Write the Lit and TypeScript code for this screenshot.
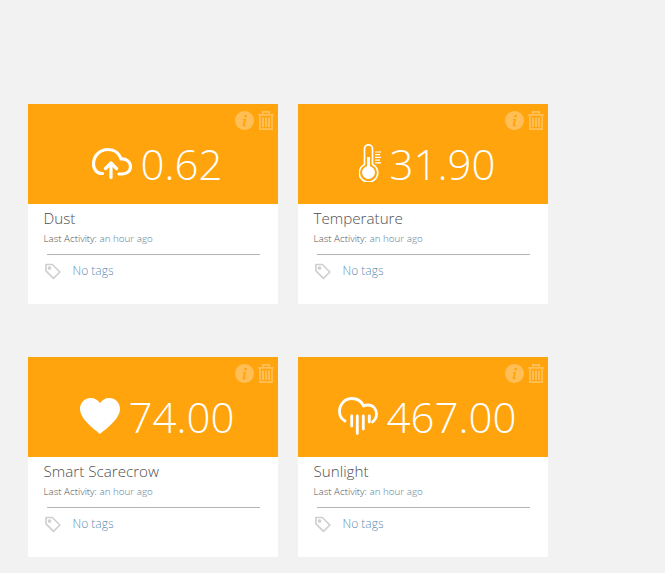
import { LitElement, html, css, svg } from 'lit';
import { customElement, property } from 'lit/decorators.js';

const icons: Record<string, unknown> = {
  upload: svg`<svg class="kind" style="width:40px;height:32px" viewBox="0 0 40 32" fill="none" stroke="#fff" stroke-width="3.200" stroke-linecap="round" stroke-linejoin="round">
    <path d="M10.500 26.500C5 26.500 1.500 22.500 1.500 17 1.500 8.500 8 2.500 16 2.500c6 0 11 3.500 13 9.500 5.500-.5 9.500 3 9.500 7.500s-3.500 7.500-8 7.500H27"/>
    <path d="M19 30.500V16M13.500 21.500 19 16l5.500 5.500"/></svg>`,
  thermo: svg`<svg class="kind" style="width:22px;height:38px" viewBox="0 0 22 38" fill="none" stroke="#fff">
    <path stroke-width="1.700" d="M5.500 20.500V4.800a4 4 0 0 1 8 0v15.700a9.200 9.200 0 1 1-8 0Z"/>
    <circle cx="9.500" cy="28.500" r="6.500" fill="#fff" stroke="none"/>
    <path stroke-width="3" d="M9.500 13v14"/>
    <path stroke-width="1.200" d="M16 8h6M16 10.700h5M16 13.400h6M16 16.100h5M16 18.800h6"/></svg>`,
  heart: svg`<svg class="kind" style="width:40px;height:36px" viewBox="0 0 41 37" fill="#fff" preserveAspectRatio="none">
    <path d="M20.500 37C17 33.500 0 22.500 0 11.300 0 4.800 5 0 11 0c4 0 7.500 2 9.500 5.500C22.500 2 26 0 30 0c6 0 11 4.800 11 11.300C41 22.500 24 33.500 20.500 37Z"/></svg>`,
  rain: svg`<svg class="kind" style="width:40px;height:38px" viewBox="0 0 40 38" fill="none" stroke="#fff" stroke-width="2.800" stroke-linecap="round" stroke-linejoin="round">
    <path d="M7 24C3.500 22 1.500 18.500 1.500 14.500 1.500 7 7 1.500 14 1.500c5 0 9.500 3 11.500 7.500 1.500-1 3-1 4.500-1 5 0 8.500 4 8.500 9 0 3-1.500 6-4 8"/>
    <path d="M13.700 19v10M19.300 19v17.500M25.300 19v13M31.300 19v6"/></svg>`,
};

const info = html`<svg class="tool" style="width:19px;height:19px" viewBox="0 0 19 19" fill="#fff">
  <path fill-rule="evenodd" d="M9.500 0a9.500 9.500 0 1 1 0 19 9.500 9.500 0 0 1 0-19Zm1.100 3.700a1.400 1.400 0 1 0 0 2.800 1.400 1.400 0 0 0 0-2.800ZM8 8l-.2.900h1.100l-1.200 5c-.2 1 .3 1.500 1.200 1.500.8 0 1.700-.4 2.300-1.100l-.2-.6c-.3.200-.7.400-1 .4-.2 0-.3-.2-.2-.6L11.100 8Z"/></svg>`;

const trash = html`<svg class="tool" style="width:16px;height:19px" viewBox="0 0 16 19" fill="none" stroke="#fff" stroke-width="1.700">
  <path d="M.2 3.900h15.600M4.800 3.700V.9h6.400v2.800M2 4v14.200h12V4"/>
  <path stroke-width="2" d="M5 6.500v9.500M8 6.500v9.500M11 6.500v9.500"/></svg>`;

const tag = html`<svg class="tag" viewBox="0 0 17 17" fill="none" stroke="#cfcfcf" stroke-width="1.700" stroke-linejoin="round">
  <path d="M1 1h6.800l8 8-6.800 6.800-8-8Z"/><circle cx="4.800" cy="4.800" r="1.100"/></svg>`;

@customElement('device-card')
export class DeviceCard extends LitElement {
  static styles = css`
    :host {
      display: block;
      width: 250px;
      height: 200px;
      background: #fff;
    }
    .head {
      position: relative;
      height: 100px;
      background: #ffa40d;
      display: flex;
      align-items: center;
      justify-content: center;
      padding: 18px 0 0 8px;
      box-sizing: border-box;
    }
    .tools {
      position: absolute;
      top: 7px;
      right: 4px;
      display: flex;
      align-items: center;
      gap: 4px;
      opacity: 0.3;
    }
    .tool {
      display: block;
    }
    .kind {
      flex: none;
      display: block;
      margin-right: 9px;
    }
    .value {
      font: 300 42px/57px 'Open Sans', sans-serif;
      color: #fff;
    }
    .body {
      padding: 4px 16px 0 15.500px;
    }
    .name {
      font: 300 15.200px/20px 'Open Sans', sans-serif;
      color: #4f4f4f;
    }
    .activity {
      font: 300 9.800px/12px 'Open Sans', sans-serif;
      color: #555;
      margin-top: 5px;
    }
    .activity span {
      color: #5b7d96;
    }
    hr {
      border: 0;
      border-top: 1px solid #b4b4b4;
      margin: 9px 2px 0 3.500px;
    }
    .tags {
      display: flex;
      align-items: center;
      margin-top: 7px;
      height: 18px;
    }
    .tag {
      width: 16px;
      height: 17px;
      flex: none;
      margin: 0 12px 0 1px;
    }
    .none {
      font: 300 12px/16px 'Open Sans', sans-serif;
      color: #5f8fb4;
    }
  `;

  @property() name = '';
  @property() value = '';
  @property() icon = '';

  render() {
    return html`
      <div class="head">
        <div class="tools">${info}${trash}</div>
        ${icons[this.icon]}
        <span class="value">${this.value}</span>
      </div>
      <div class="body">
        <div class="name">${this.name}</div>
        <div class="activity">Last Activity: <span>an hour ago</span></div>
        <hr />
        <div class="tags">${tag}<span class="none">No tags</span></div>
      </div>
    `;
  }
}

@customElement('app-root')
export class AppRoot extends LitElement {
  static styles = css`
    :host {
      display: block;
      min-height: 573px;
      box-sizing: border-box;
      background: #f2f2f2;
      padding: 104px 0 0 28px;
    }
    .grid {
      display: grid;
      grid-template-columns: 250px 250px;
      column-gap: 20px;
      row-gap: 53px;
    }
  `;

  render() {
    return html`
      <div class="grid">
        <device-card name="Dust" value="0.62" icon="upload"></device-card>
        <device-card name="Temperature" value="31.90" icon="thermo"></device-card>
        <device-card name="Smart Scarecrow" value="74.00" icon="heart"></device-card>
        <device-card name="Sunlight" value="467.00" icon="rain"></device-card>
      </div>
    `;
  }
}
